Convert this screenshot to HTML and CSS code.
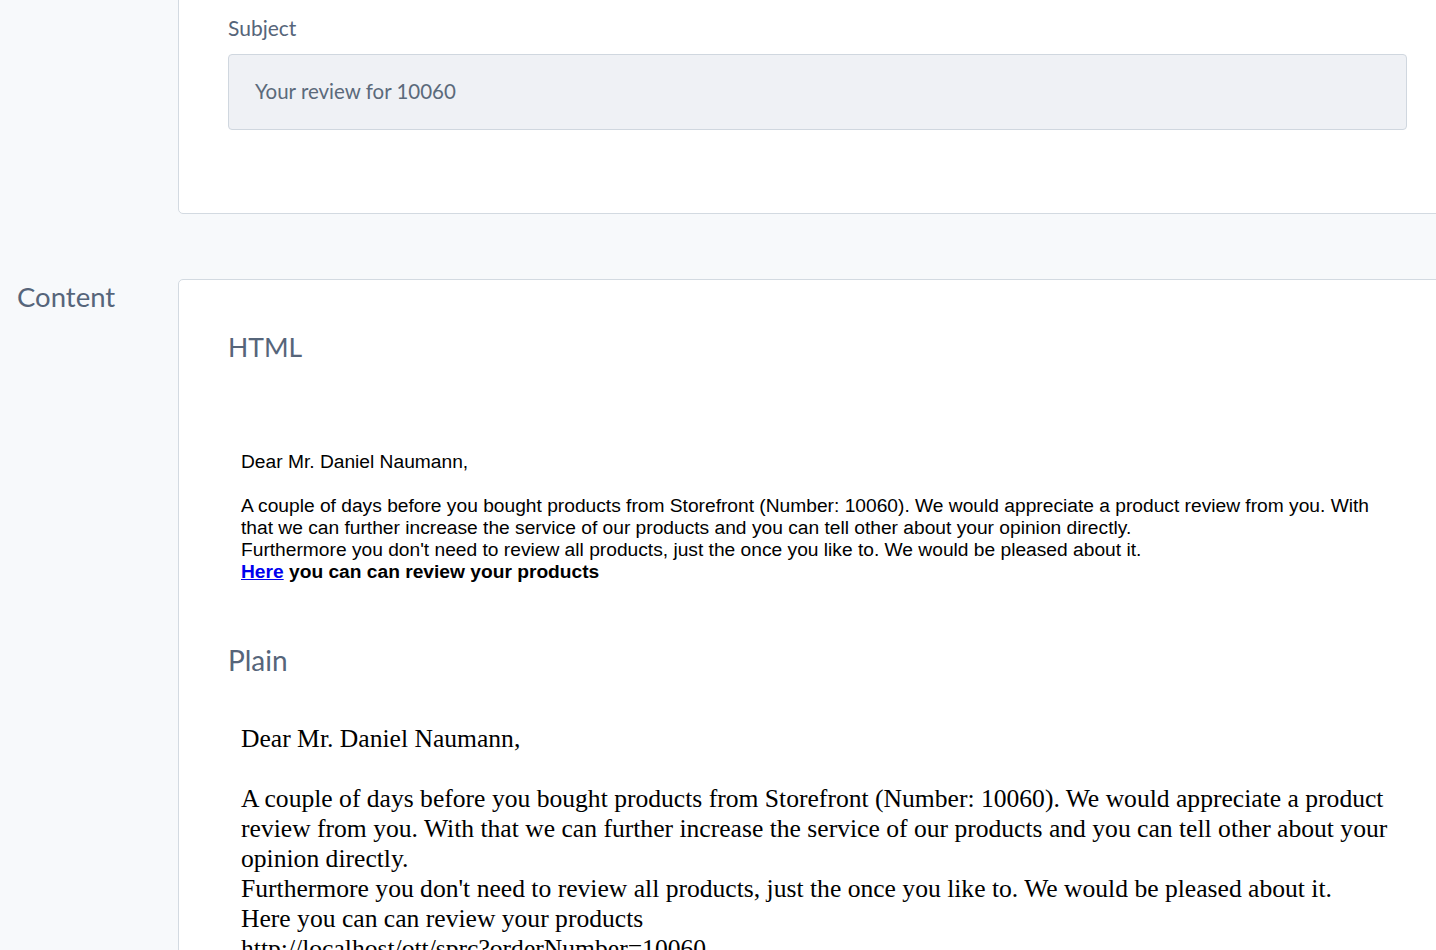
FILE: index.html
```html
<!DOCTYPE html>
<html lang="en">
<head>
<meta charset="utf-8">
<title>Mail template</title>
<link rel="stylesheet" href="styles.css">
</head>
<body>
<div class="page">
  <div class="row row-top">
    <div class="side"></div>
    <div class="card card-top">
      <div class="field-label">Subject</div>
      <div class="input">Your review for 10060</div>
    </div>
  </div>
  <div class="row row-content">
    <div class="side"><div class="side-title">Content</div></div>
    <div class="card card-content">
      <div class="section-title">HTML</div>
      <div class="html-mail">Dear Mr. Daniel Naumann,<br><br>A couple of days before you bought products from Storefront (Number: 10060). We would appreciate a product review from you. With that we can further increase the service of our products and you can tell other about your opinion directly.<br>Furthermore you don't need to review all products, just the once you like to. We would be pleased about it.<br><b><a href="#" class="mail-link">Here</a> you can can review your products</b></div>
      <div class="section-title section-plain">Plain</div>
      <div class="plain-mail">Dear Mr. Daniel Naumann,

A couple of days before you bought products from Storefront (Number: 10060). We would appreciate a product review from you. With that we can further increase the service of our products and you can tell other about your opinion directly.
Furthermore you don't need to review all products, just the once you like to. We would be pleased about it.
Here you can can review your products
http://localhost/ott/sprc?orderNumber=10060</div>
    </div>
  </div>
</div>
</body>
</html>
```
FILE: styles.css
```css
html, body {
  margin: 0;
  padding: 0;
}
body {
  background: #f7f9fb;
  overflow: hidden;
  height: 950px;
  font-family: "Source Sans Pro", "Lato", "Open Sans", sans-serif;
  color: #56657a;
}
.page {
  width: 1500px;
}
.row {
  display: flex;
  align-items: flex-start;
}
.side {
  flex: 0 0 178px;
}
.card {
  flex: 0 0 1300px;
  box-sizing: border-box;
  background: #ffffff;
  border: 1px solid #d3dae1;
  border-radius: 5px;
  padding-left: 49px;
  padding-right: 70px;
}
.card-top {
  margin-top: -40px;
  padding-top: 55px;
  padding-bottom: 83px;
}
.field-label {
  font-size: 21px;
  line-height: 24px;
  margin-bottom: 14px;
}
.input {
  box-sizing: border-box;
  height: 76px;
  background: #eff1f5;
  border: 1px solid #d0d7df;
  border-radius: 4px;
  padding-left: 26px;
  font-size: 20.5px;
  line-height: 72px;
  color: #5b6a7b;
}
.row-content {
  margin-top: 65px;
}
.side-title {
  padding-top: 2px;
  padding-left: 17px;
  font-size: 27.5px;
  line-height: 32px;
  color: #56657a;
}
.card-content {
  padding-top: 51px;
  padding-bottom: 40px;
}
.section-title {
  font-size: 26.5px;
  line-height: 32px;
  color: #56657a;
}
.section-plain {
  margin-top: 61px;
  font-size: 28px;
}
.html-mail {
  margin-top: 88px;
  padding: 0 13px;
  font-family: "Liberation Sans", Arial, sans-serif;
  font-size: 19.2px;
  line-height: 22px;
  color: #000000;
}
.mail-link {
  color: #0000ee;
  text-decoration: underline;
}
.plain-mail {
  margin-top: 48px;
  padding: 0 13px;
  font-family: "Liberation Serif", "Times New Roman", serif;
  font-size: 25.6px;
  line-height: 30px;
  color: #000000;
  white-space: pre-wrap;
}
```
